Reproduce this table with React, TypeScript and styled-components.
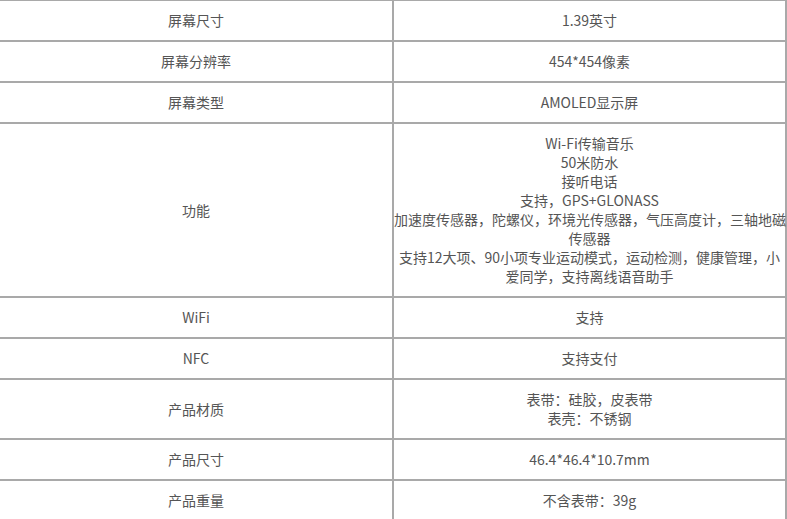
import React from "react";
import styled, { createGlobalStyle } from "styled-components";

const GlobalStyle = createGlobalStyle`
  html, body {
    margin: 0;
    padding: 0;
    background: #fff;
    overflow: hidden;
  }
  body {
    font-family: "Noto Sans CJK SC", "Noto Sans", sans-serif;
  }
`;

const SpecTable = styled.table`
  margin: -1px 0 0 -2px;
  width: 789px;
  table-layout: fixed;
  border-collapse: separate;
  border-spacing: 0;
  border-top: 2px solid #a9a9a9;
  border-left: 2px solid #a9a9a9;
  font-size: 14px;
  line-height: 19px;
  color: #555;
`;

const Cell = styled.td<{ $wide?: boolean }>`
  padding: 10px 0;
  text-align: center;
  vertical-align: middle;
  white-space: nowrap;
  width: ${(p) => (p.$wide ? "392px" : "391px")};
  border-right: 2px solid #a9a9a9;
  border-bottom: 2px solid #a9a9a9;
`;

const rows: { label: string; value: string[] }[] = [
  { label: "屏幕尺寸", value: ["1.39英寸"] },
  { label: "屏幕分辨率", value: ["454*454像素"] },
  { label: "屏幕类型", value: ["AMOLED显示屏"] },
  {
    label: "功能",
    value: [
      "Wi-Fi传输音乐",
      "50米防水",
      "接听电话",
      "支持，GPS+GLONASS",
      "加速度传感器，陀螺仪，环境光传感器，气压高度计，三轴地磁",
      "传感器",
      "支持12大项、90小项专业运动模式，运动检测，健康管理，小",
      "爱同学，支持离线语音助手",
    ],
  },
  { label: "WiFi", value: ["支持"] },
  { label: "NFC", value: ["支持支付"] },
  { label: "产品材质", value: ["表带：硅胶，皮表带", "表壳：不锈钢"] },
  { label: "产品尺寸", value: ["46.4*46.4*10.7mm"] },
  { label: "产品重量", value: ["不含表带：39g"] },
];

export default function App() {
  return (
    <>
      <GlobalStyle />
      <SpecTable>
        <tbody>
          {rows.map((r) => (
            <tr key={r.label}>
              <Cell $wide>{r.label}</Cell>
              <Cell>
                {r.value.map((line, i) => (
                  <React.Fragment key={i}>
                    {i > 0 && <br />}
                    {line}
                  </React.Fragment>
                ))}
              </Cell>
            </tr>
          ))}
        </tbody>
      </SpecTable>
    </>
  );
}
